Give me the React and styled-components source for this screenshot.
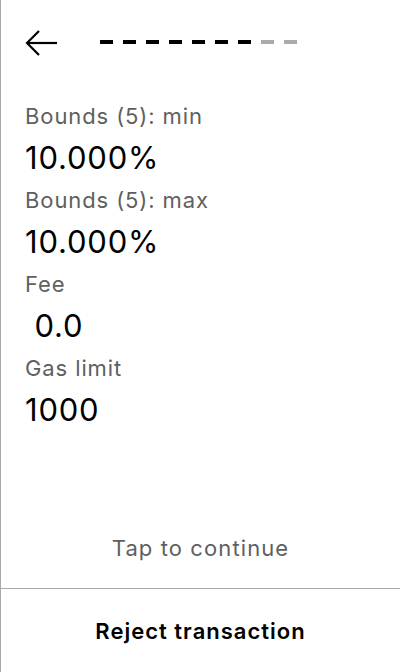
import React from 'react';
import styled, { createGlobalStyle } from 'styled-components';

const Global = createGlobalStyle`
  html, body { margin: 0; padding: 0; background: #fff; }
  body { font-family: Inter, "Noto Sans", sans-serif; }
`;

const Screen = styled.div`
  height: 672px;
  box-sizing: border-box;
  border-left: 1px solid #aaa;
  display: flex;
  flex-direction: column;
`;

const Header = styled.div`
  height: 86px;
  display: flex;
  align-items: center;
  padding-left: 24px;
  box-sizing: border-box;
`;

const BackButton = styled.button`
  border: 0;
  background: none;
  padding: 0;
  width: 34px;
  height: 28px;
  display: flex;
  align-items: center;
  cursor: pointer;
`;

const Progress = styled.div`
  display: flex;
  gap: 10px;
  margin-left: 41px;
  margin-top: -2px;
`;

const Dash = styled.span`
  width: 13px;
  height: 4px;
  background: ${p => (p.done ? '#000' : '#aaa')};
`;

const Fields = styled.div`
  padding: 9px 24px 0;
`;

const Label = styled.div`
  font-size: 22px;
  letter-spacing: 0.9px;
  line-height: 42px;
  color: #5f5f5f;
`;

const Value = styled.div`
  font-size: 31px;
  letter-spacing: 0.8px;
  line-height: 42px;
  color: #000;
  white-space: pre;
`;

const Spacer = styled.div`
  flex: 1;
`;

const Hint = styled.div`
  text-align: center;
  font-size: 22px;
  letter-spacing: 1.1px;
  color: #5f5f5f;
  line-height: 24px;
  padding-bottom: 28px;
`;

const Footer = styled.button`
  border: 0;
  border-top: 1px solid #aaa;
  background: none;
  height: 84px;
  font-family: inherit;
  font-size: 22px;
  letter-spacing: 1px;
  font-weight: 600;
  color: #000;
  cursor: pointer;
`;

const fields = [
  ['Bounds (5): min', '10.000%'],
  ['Bounds (5): max', '10.000%'],
  ['Fee', ' 0.0'],
  ['Gas limit', '1000'],
];

export default function App() {
  return (
    <>
      <Global />
      <Screen>
        <Header>
          <BackButton aria-label="Back">
            <svg width="33" height="28" viewBox="0 0 33 28" fill="none" stroke="#000" strokeWidth="2.2">
              <path d="M32 14H2" />
              <path d="M14 2L2 14l12 12" />
            </svg>
          </BackButton>
          <Progress>
            {Array.from({ length: 9 }).map((_, i) => (
              <Dash key={i} done={i < 7} />
            ))}
          </Progress>
        </Header>
        <Fields>
          {fields.map(([l, v]) => (
            <div key={l}>
              <Label>{l}</Label>
              <Value>{v}</Value>
            </div>
          ))}
        </Fields>
        <Spacer />
        <Hint>Tap to continue</Hint>
        <Footer>Reject transaction</Footer>
      </Screen>
    </>
  );
}
